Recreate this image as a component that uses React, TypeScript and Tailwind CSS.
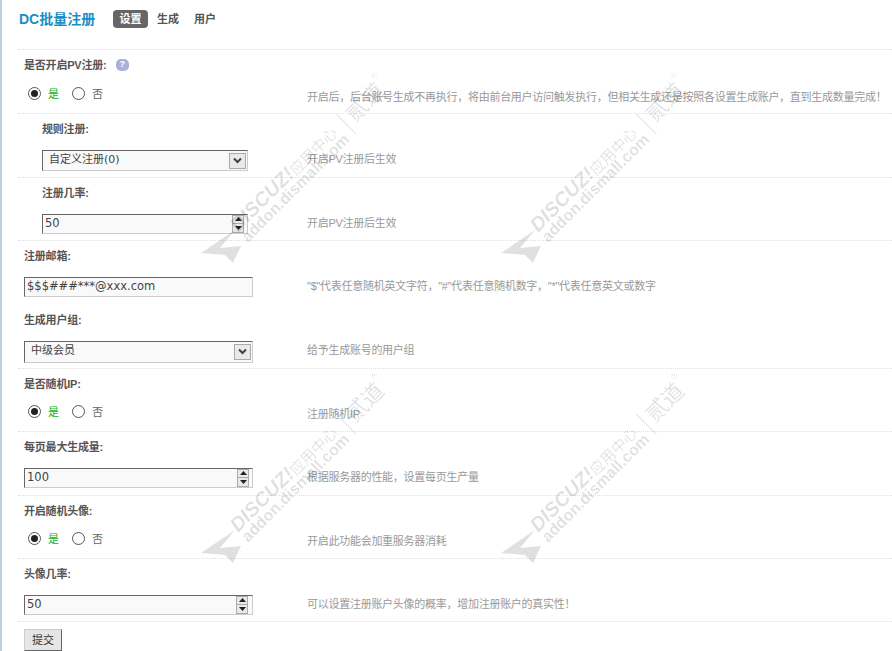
const latin = 'font-["DejaVu_Sans","Noto_Sans_CJK_SC",sans-serif]'

function Radio({ checked }: { checked?: boolean }) {
  return (
    <span className="flex h-[13px] w-[13px] items-center justify-center rounded-full border border-[#555] bg-white">
      {checked && <span className="h-[7px] w-[7px] rounded-full bg-[#222]" />}
    </span>
  )
}

function RadioPair({ up }: { up?: boolean }) {
  return (
    <div className={`ml-1 flex items-center text-[11px] font-['Noto_Sans_CJK_SC',sans-serif] ${up ? '-mt-[6px]' : '-mt-1'}`}>
      <Radio checked />
      <span className="ml-[7px] text-[#0fb30f]">是</span>
      <span className="ml-[13px]"><Radio /></span>
      <span className="ml-[7px] text-[#666]">否</span>
    </div>
  )
}

function SelectBox({ value, wide }: { value: string; wide?: boolean }) {
  return (
    <div className={`mt-[2px] flex items-center justify-between border border-t-[#666] border-l-[#666] border-r-[#ccc] border-b-[#ccc] bg-[#f9f9f9] pr-[1px] ${wide ? 'h-[22px] w-[229px] pl-[6px]' : 'h-[21px] w-[206px] pl-[6px]'}`}>
      <span className={`text-[11px] text-[#444] ${latin}`}>{value}</span>
      <span className="flex h-[16px] w-[17px] items-center justify-center border border-[#aaa] bg-[#e9e9e9]">
        <svg width="9" height="7" viewBox="0 0 9 7"><path d="M1 1.5 4.5 5 8 1.5" fill="none" stroke="#444" strokeWidth="2" /></svg>
      </span>
    </div>
  )
}

function NumberBox({ value, wide, tail }: { value: string; wide?: boolean; tail?: boolean }) {
  return (
    <div className={`flex h-[20px] items-center justify-between border border-t-[#666] border-l-[#666] border-r-[#ccc] border-b-[#ccc] bg-[#f9f9f9] pl-[2px] ${wide ? 'w-[229px]' : 'w-[206px]'} ${tail ? 'pr-[4px]' : 'pr-[3px]'}`}>
      <span className={`text-[11.5px] text-[#444] ${latin}`}>{value}</span>
      <span className="flex w-[12px] flex-col border border-[#aaa] bg-[#e9e9e9]">
        <span className="flex h-[8px] items-center justify-center border-b border-[#aaa]">
          <svg width="7" height="4" viewBox="0 0 7 4"><path d="M3.5 0 7 4H0z" fill="#222" /></svg>
        </span>
        <span className="flex h-[8px] items-center justify-center">
          <svg width="7" height="4" viewBox="0 0 7 4"><path d="M0 0h7L3.5 4z" fill="#222" /></svg>
        </span>
      </span>
    </div>
  )
}

function Row({ label, desc, hint, inner, short, noLine, lowDesc, children }: {
  label: string
  desc: string
  hint?: boolean
  inner?: boolean
  short?: boolean
  noLine?: boolean
  lowDesc?: boolean
  children: React.ReactNode
}) {
  return (
    <div className={`${short ? 'h-[63px]' : 'h-[64px]'} ${noLine ? '' : 'border-b border-dotted border-[#d3e4ea]'}`}>
      <div className={`mb-[2px] flex h-[30px] items-center text-[11px] font-bold tracking-[-0.2px] text-[#555] ${inner ? 'pl-[24px]' : 'pl-[6px]'}`}>
        {label}
        {hint && (
          <span className="ml-[9px] flex h-[12px] w-[13px] items-center justify-center rounded-[5px] bg-[#aab0dc] text-[9px] text-white">?</span>
        )}
      </div>
      <div className="-mt-[2px] grid h-[31px] grid-cols-[289px_1fr] items-center">
        <div className={inner ? 'pl-[24px]' : 'pl-[6px]'}>{children}</div>
        <span className={`text-[11px] tracking-[-0.27px] whitespace-nowrap text-[#999] ${lowDesc ? 'mt-[3px]' : ''}`}>{desc}</span>
      </div>
    </div>
  )
}

function Mark({ pos }: { pos: string }) {
  return (
    <div className={`pointer-events-none absolute h-[200px] w-[200px] text-[#000]/[0.12] ${pos}`}>
      <svg className="absolute top-[150px] left-0" width="50" height="45" viewBox="0 0 50 45">
        <path d="M9 33 43 10 28 28 49 26 41 43 33 35z" fill="currentColor" />
      </svg>
      <div className="absolute top-[145px] left-[48px] flex h-[20px] origin-bottom-left -rotate-45 items-center leading-none whitespace-nowrap">
        <span className="font-['Liberation_Sans'] text-[20px] font-bold italic">DISCUZ!</span>
        <span className="mt-[5px] text-[15px]">应用中心</span>
        <span className="mt-[14px] mr-[6px] ml-[12px] h-[28px] w-[1px] bg-current" />
        <span className="mt-[10px] text-[22px]">贰道</span>
        <span className="mb-[16px] text-[9px]">®</span>
      </div>
      <div className="absolute top-[159px] left-[58px] origin-bottom-left -rotate-45 font-['Liberation_Sans'] text-[16px] leading-none font-bold whitespace-nowrap">
        addon.dismall.com
      </div>
    </div>
  )
}

export default function App() {
  return (
    <div className="relative h-[651px] w-[892px] overflow-hidden border-l-2 border-[#bcd3dc] bg-white font-['Liberation_Sans','Noto_Sans_CJK_SC',sans-serif]">
      <div className="ml-[16px]">
        <div className="flex h-[50px] items-start border-b border-dotted border-[#d3e4ea] pt-[10px]">
          <h1 className="ml-[1px] w-[94px] text-[14px] leading-[19px] font-bold text-[#1a8fc4]">DC批量注册</h1>
          <nav className="flex items-center text-[11px] font-bold text-[#555]">
            <span className="flex h-[18px] w-[35px] items-center justify-center rounded-[4px] bg-[#666] text-white">设置</span>
            <span className="ml-[9px]">生成</span>
            <span className="ml-[15px]">用户</span>
          </nav>
        </div>
        <Row lowDesc label="是否开启PV注册:" hint desc="开启后，后台账号生成不再执行，将由前台用户访问触发执行，但相关生成还是按照各设置生成账户，直到生成数量完成！">
          <RadioPair />
        </Row>
        <Row inner label="规则注册:" desc="开启PV注册后生效">
          <SelectBox value="自定义注册(0)" />
        </Row>
        <Row inner short label="注册几率:" desc="开启PV注册后生效">
          <NumberBox value="50" />
        </Row>
        <Row noLine label="注册邮箱:" desc={'"$"代表任意随机英文字符，"#"代表任意随机数字，"*"代表任意英文或数字'}>
          <div className={`flex h-[20px] w-[229px] items-center border border-t-[#666] border-l-[#666] border-r-[#ccc] border-b-[#ccc] bg-[#f9f9f9] pl-[2px] text-[11.5px] text-[#444] ${latin}`}>
            $$$###***@xxx.com
          </div>
        </Row>
        <Row label="生成用户组:" desc="给予生成账号的用户组">
          <SelectBox wide value="中级会员" />
        </Row>
        <Row short label="是否随机IP:" desc="注册随机IP">
          <RadioPair up />
        </Row>
        <Row label="每页最大生成量:" desc="根据服务器的性能，设置每页生产量">
          <NumberBox wide value="100" />
        </Row>
        <Row short label="开启随机头像:" desc="开启此功能会加重服务器消耗">
          <RadioPair up />
        </Row>
        <Row short label="头像几率:" desc="可以设置注册账户头像的概率，增加注册账户的真实性！">
          <NumberBox wide tail value="50" />
        </Row>
        <button className="mt-[7px] ml-[6px] h-[22px] w-[38px] border border-t-[#ccc] border-l-[#ccc] border-r-[#666] border-b-[#666] bg-[#e6e6e6] text-[11px] text-[#333]">
          提交
        </button>
      </div>
      <Mark pos="top-[70px] left-[190px]" />
      <Mark pos="top-[70px] left-[490px]" />
      <Mark pos="top-[370px] left-[190px]" />
      <Mark pos="top-[370px] left-[490px]" />
    </div>
  )
}
